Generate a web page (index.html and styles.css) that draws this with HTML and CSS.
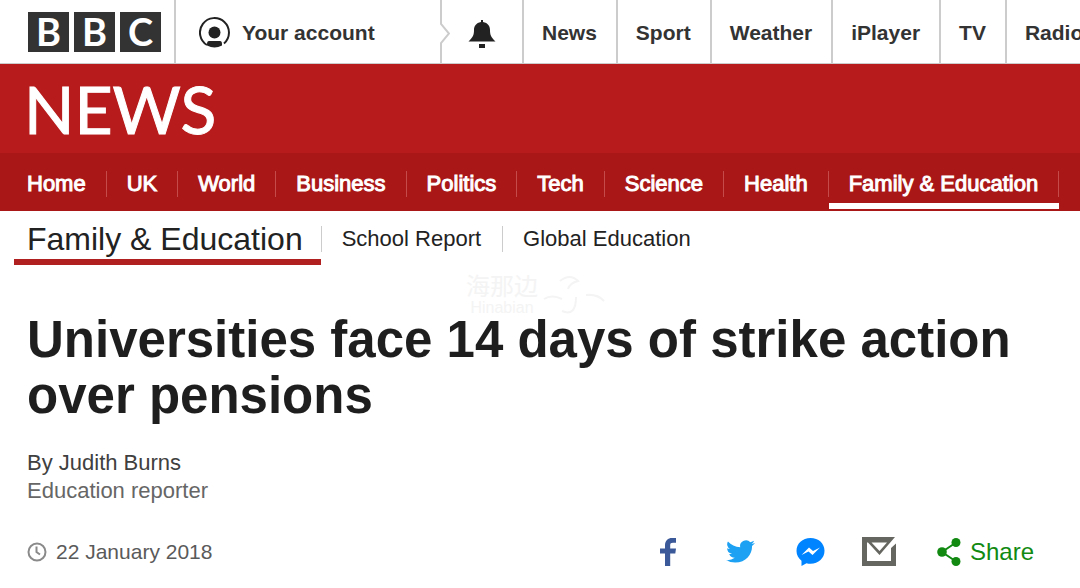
FILE: index.html
```html
<!DOCTYPE html>
<html lang="en">
<head>
    <meta charset="UTF-8">
    <meta name="viewport" content="width=device-width, initial-scale=1.0">
    <title>Universities face 14 days of strike action over pensions - BBC News</title>
    <link rel="stylesheet" href="styles.css">
</head>
<body>
    <header class="topbar">
        <a class="logo" href="#">
            <span>B</span>
            <span>B</span>
            <span>C</span>
        </a>
        <a class="account" href="#">
            <svg width="31" height="31" viewBox="0 0 31 31" aria-hidden="true">
                <path d="M8 28A14.5 14.5 0 1 1 25 26.500" fill="none" stroke="#222" stroke-width="2"/>
                <circle cx="15.500" cy="15.500" r="6" fill="#222"/>
                <path d="M10 24h11q2 0 2 3v1.500q-7.500 4-15 0V27q0-3 2-3z" fill="#222"/>
            </svg>
            <span>Your account</span>
        </a>
        <svg class="notch" width="10" height="63" viewBox="0 0 10 63" aria-hidden="true">
            <path d="M1 0V24L9 33.500L1 43V63" fill="none" stroke="#ccc" stroke-width="2"/>
        </svg>
        <a class="bell" href="#" aria-label="Notifications">
            <svg width="28" height="28" viewBox="0 0 28 28" aria-hidden="true">
                <path d="M13 0h2v2c5 1 7 4 7 8 0 5 1 7 5.500 11.500H.5C5 17 6 15 6 10c0-4 2-7 7-8z" fill="#222"/>
                <path d="M11 24h6v4h-6z" fill="#222"/>
            </svg>
        </a>
        <nav class="services">
            <a href="#">News</a>
            <a href="#">Sport</a>
            <a href="#">Weather</a>
            <a href="#">iPlayer</a>
            <a href="#">TV</a>
            <a href="#">Radio</a>
        </nav>
    </header>

    <div class="brand">
        <a href="#">NEWS</a>
    </div>

    <nav class="sections">
        <a href="#">Home</a>
        <a href="#">UK</a>
        <a href="#">World</a>
        <a href="#">Business</a>
        <a href="#">Politics</a>
        <a href="#">Tech</a>
        <a href="#">Science</a>
        <a href="#">Health</a>
        <a class="active" href="#">Family &amp; Education</a>
    </nav>

    <nav class="subnav">
        <a class="current" href="#">Family &amp; Education</a>
        <a href="#">School Report</a>
        <a href="#">Global Education</a>
    </nav>

    <main class="story">
        <div class="watermark">
            <div class="watermark-name">
                <span class="watermark-zh" lang="zh">海那边</span>
                <span>Hinabian</span>
            </div>
            <svg width="64" height="42" viewBox="0 0 64 42" fill="none" stroke="#f4f4f4" stroke-width="2" aria-hidden="true">
                <path d="M2 24Q10 19 20 24M18 6Q28-2 36 6Q28 8 26 14M20 36Q34 42 34 22M44 20Q56 19 62 26"/>
            </svg>
        </div>

        <h1>Universities face 14 days of strike action over pensions</h1>

        <div class="byline">
            <div class="author">By Judith Burns</div>
            <div>Education reporter</div>
        </div>

        <div class="meta">
            <svg width="20" height="20" viewBox="0 0 20 20" fill="none" stroke="#8a8a8a" stroke-width="2" aria-hidden="true">
                <circle cx="10" cy="10" r="8.500"/>
                <path d="M9.500 4.500V10L13 12.500"/>
            </svg>
            <time datetime="2018-01-22">22 January 2018</time>
            <div class="share">
                <a href="#" aria-label="Facebook">
                    <svg width="16" height="28" viewBox="0 0 16 28" aria-hidden="true">
                        <path d="M5 28V15.500H0v-5h5V7.500C5 2.500 8 0 12 0h4v4.800h-3c-2 0-2.800.7-2.800 2.500v3.200H16l-.7 5h-5.100V28z" fill="#3b5998"/>
                    </svg>
                </a>
                <a href="#" aria-label="Twitter">
                    <svg width="29" height="25" viewBox="0 1 24 22" preserveAspectRatio="none" aria-hidden="true">
                        <path d="M23.950 4.570a10 10 0 0 1-2.820.770 4.960 4.960 0 0 0 2.160-2.720 9.900 9.900 0 0 1-3.120 1.190 4.920 4.920 0 0 0-8.380 4.480C7.690 8.090 4.070 6.130 1.640 3.160a4.920 4.920 0 0 0 1.520 6.570 4.900 4.900 0 0 1-2.230-.610v.060a4.920 4.920 0 0 0 3.950 4.830 5 5 0 0 1-2.210.080 4.940 4.940 0 0 0 4.600 3.420A9.870 9.870 0 0 1 0 19.540a13.990 13.990 0 0 0 7.550 2.210c9.050 0 14-7.500 14-13.980 0-.210 0-.420-.020-.630a9.940 9.940 0 0 0 2.460-2.550z" fill="#1da1f2"/>
                    </svg>
                </a>
                <a href="#" aria-label="Messenger">
                    <svg width="29" height="29" viewBox="0 0 29 29" aria-hidden="true">
                        <path d="M14.500 1C6.500 1 .5 6.500.5 14c0 4 2 7.500 5 9.800V29l5-2.800c1.300.4 2.600.5 4 .5 8 0 14-5.500 14-12.900S22.500 1 14.500 1z" fill="#0084ff"/>
                        <path d="M5.500 18L13 10.500l4 3.500 7-3.500L16.500 18l-4-3.500z" fill="#fff"/>
                    </svg>
                </a>
                <a href="#" aria-label="Email">
                    <svg width="34" height="29" viewBox="0 0 34 29" aria-hidden="true">
                        <path d="M0 0H33L17.500 18 6 5.500H5V24H29V11L34 6.500V29H0zM9.500 5.500L17.500 14 25 5.500z" fill="#666660" fill-rule="evenodd"/>
                    </svg>
                </a>
                <button type="button">
                    <svg width="24" height="28" viewBox="0 0 24 28" aria-hidden="true">
                        <path d="M19 4.500L5 14l14 9.500" fill="none" stroke="#128a12" stroke-width="2"/>
                        <circle cx="19" cy="4.500" r="4.500" fill="#128a12"/>
                        <circle cx="5" cy="14" r="4.800" fill="#128a12"/>
                        <circle cx="19" cy="23.500" r="4.500" fill="#128a12"/>
                    </svg>
                    Share
                </button>
            </div>
        </div>
    </main>
</body>
</html>
```
FILE: styles.css
```css
* {
    box-sizing: border-box;
}

body {
    margin: 0;
    font-family: "Liberation Sans", Arial, sans-serif;
    font-size: 22px;
    background-color: #fff;
    color: #222;
    overflow-x: hidden;
}

a {
    color: inherit;
    text-decoration: none;
}

svg {
    display: block;
    flex-shrink: 0;
}

/* top bar */
.topbar {
    display: flex;
    height: 64px;
    overflow: hidden;
    border-bottom: 1px solid #ccc;
    font-size: 21px;
    font-weight: bold;
    color: #333;
}

.topbar > * {
    flex-shrink: 0;
}

.logo {
    display: flex;
    align-items: center;
    gap: 5px;
    padding: 0 13px 0 28px;
    border-right: 2px solid #ccc;
}

.logo span {
    width: 41px;
    height: 40px;
    line-height: 39px;
    text-align: center;
    font-family: Lato, sans-serif;
    font-size: 38px;
    color: #fff;
    background-color: #333;
}

.account {
    display: flex;
    align-items: center;
    gap: 12px;
    min-width: 264px;
    padding: 2px 23px 0;
}

.bell {
    display: flex;
    align-items: center;
    padding: 5px 26px 0 18px;
    border-right: 2px solid #ccc;
}

.services {
    display: flex;
}

.services a {
    padding: 0 19px 0 18px;
    line-height: 65px;
    border-right: 2px solid #ccc;
}

/* red masthead */
.brand {
    padding: 0 24px;
    background-color: #b81b1b;
    color: #fff;
    font-family: Lato, sans-serif;
    font-size: 66px;
    line-height: 89px;
    -webkit-text-stroke: 1px #fff;
}

.sections {
    display: flex;
    padding: 0 7px;
    background-color: #a91717;
    color: #fff;
    -webkit-text-stroke: 1px #fff;
}

.sections a {
    position: relative;
    padding: 18px 21px 14px 20px;
    line-height: 26px;
    white-space: nowrap;
}

.sections a::before {
    content: "";
    position: absolute;
    top: 18px;
    right: 0;
    width: 1px;
    height: 26px;
    background-color: #c54b4b;
}

.sections .active::after {
    content: "";
    position: absolute;
    left: 0;
    right: 0;
    bottom: 2px;
    height: 6px;
    background-color: #fff;
}

/* sub navigation */
.subnav {
    display: flex;
    align-items: center;
    height: 56px;
    padding-left: 14px;
}

.subnav a {
    padding: 0 21px 0 20px;
    line-height: 26px;
    border-right: 1px solid #ccc;
}

.subnav a:last-child {
    border-right: none;
}

.subnav .current {
    position: relative;
    padding: 0 18px 0 13px;
    font-size: 32px;
}

.subnav .current::after {
    content: "";
    position: absolute;
    left: 0;
    right: 0;
    bottom: -13px;
    height: 6px;
    background-color: #b02020;
}

/* story */
.story {
    position: relative;
    padding: 45px 28px 0 27px;
}

h1 {
    position: relative;
    margin: 0;
    font-size: 51px;
    line-height: 56px;
    color: #1e1e1e;
}

.byline {
    margin-top: 25px;
    line-height: 28px;
    color: #666;
}

.author {
    color: #404040;
}

.meta {
    display: flex;
    align-items: center;
    gap: 9px;
    margin-top: 32px;
    font-size: 21px;
    color: #5a5a5a;
}

.share {
    display: flex;
    align-items: center;
    margin-left: auto;
    padding-right: 18px;
}

.share a {
    margin-right: 41px;
}

.share a:first-child {
    margin-right: 50px;
}

.share a:nth-child(3) {
    margin-right: 37px;
}

.share button {
    display: flex;
    align-items: center;
    gap: 9px;
    padding: 0;
    border: none;
    background: none;
    font-family: inherit;
    font-size: 24px;
    color: #128a12;
    cursor: pointer;
}

.watermark {
    position: absolute;
    top: 8px;
    left: 466px;
    display: flex;
    gap: 4px;
    color: #f4f4f4;
}

.watermark-name {
    display: flex;
    flex-direction: column;
    align-items: center;
    font-size: 16px;
    line-height: 18px;
}

.watermark-zh {
    font-family: "Liberation Sans", "Noto Sans CJK SC", sans-serif;
    font-size: 24px;
    line-height: 24px;
}
```
